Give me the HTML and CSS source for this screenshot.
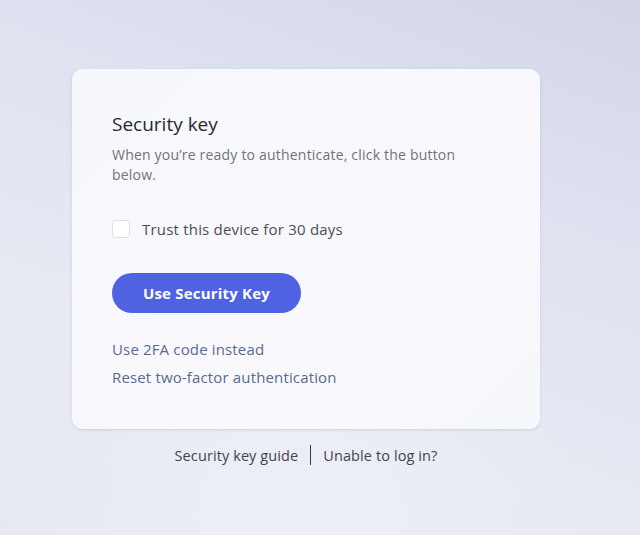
FILE: index.html
```html
<!DOCTYPE html>
<html lang="en">
<head>
<meta charset="utf-8">
<link rel="stylesheet" href="styles.css">
</head>
<body>
<main class="page">
  <div class="wrap">
    <section class="card">
      <h1 class="title">Security key</h1>
      <p class="desc">When you’re ready to authenticate, click the button below.</p>
      <label class="trust">
        <span class="box"></span>
        <span class="trust-text">Trust this device for 30 days</span>
      </label>
      <button class="btn">Use Security Key</button>
      <div class="links">
        <a class="link">Use 2FA code instead</a>
        <a class="link">Reset two-factor authentication</a>
      </div>
    </section>
    <nav class="footer">
      <a class="foot-link">Security key guide</a>
      <span class="sep"></span>
      <a class="foot-link">Unable to log in?</a>
    </nav>
  </div>
</main>
</body>
</html>
```

FILE: styles.css
```css
* { box-sizing: border-box; }
html, body { margin: 0; height: 100%; }
body {
  font-family: "Open Sans", Lato, sans-serif;
  background:
    radial-gradient(ellipse 300px 260px at 290px 520px, rgba(238,240,247,0.9), rgba(238,240,247,0) 100%),
    linear-gradient(200deg, #d2d6e8 0%, #dfe2ef 35%, #e8eaf3 70%, #e6e8f2 100%);
  color: #2c2f3a;
}
.page {
  width: 640px;
  height: 535px;
  padding: 69px 0 0 72px;
}
.wrap {
  width: 468px;
  display: flex;
  flex-direction: column;
  align-items: center;
}
.card {
  width: 468px;
  height: 360px;
  background: linear-gradient(135deg, #f7f8fc 0%, #f9f9fd 60%, #f7f8fb 100%);
  border-radius: 11px;
  box-shadow: 0 1px 3px rgba(150,155,185,0.35);
  padding: 42px 40px 0 40px;
  display: flex;
  flex-direction: column;
  align-items: flex-start;
}
.title {
  margin: 0;
  font-size: 19px;
  font-weight: 400;
  color: #262a35;
  line-height: 27px;
}
.desc {
  margin: 7px 0 0;
  max-width: 360px;
  font-size: 14px;
  letter-spacing: 0.2px;
  line-height: 20px;
  color: #6f737f;
}
.trust {
  margin-top: 34px;
  display: flex;
  align-items: center;
  gap: 12px;
}
.box {
  width: 18px;
  height: 18px;
  border: 1px solid #dfe1e8;
  border-radius: 3px;
  background: #fff;
}
.trust-text {
  font-size: 15px;
  letter-spacing: 0.2px;
  color: #4a4e5a;
}
.btn {
  margin-top: 34px;
  width: 189px;
  height: 40px;
  border: 0;
  border-radius: 20px;
  background: #4f63e2;
  color: #fff;
  font-family: "Open Sans", sans-serif;
  font-weight: 700;
  font-size: 15px;
  letter-spacing: 0.2px;
  padding: 0;
}
.links {
  margin-top: 26px;
  display: flex;
  flex-direction: column;
  gap: 8px;
}
.link {
  font-size: 15px;
  letter-spacing: 0.15px;
  line-height: 20px;
  color: #5a6993;
}
.footer {
  margin-top: 16px;
  display: flex;
  align-items: center;
  gap: 12px;
}
.foot-link {
  font-size: 14.5px;
  letter-spacing: 0.1px;
  color: #3f4352;
}
.sep {
  width: 1px;
  height: 20px;
  background: #3a3e4c;
}
```
